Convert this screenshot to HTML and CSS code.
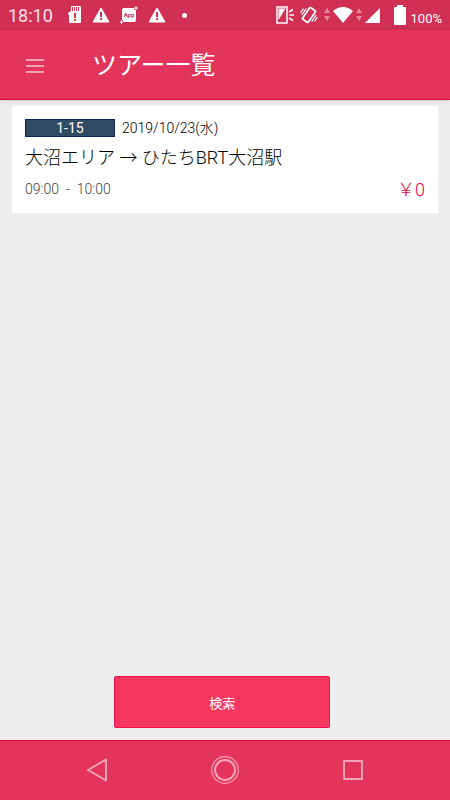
FILE: index.html
```html
<!DOCTYPE html>
<html lang="ja">
<head>
<meta charset="utf-8">
<meta name="viewport" content="width=device-width, initial-scale=1">
<title>ツアー一覧</title>
<link rel="stylesheet" href="styles.css">
</head>
<body>
<div class="status">
  <span class="clock">18:10</span>
  <div class="notices">
    <svg width="14" height="18" viewBox="0 0 14 18"><path fill="#fff" d="M3 0h9a1 1 0 0 1 1 1v15a1 1 0 0 1-1 1H2a1 1 0 0 1-1-1V9L0 8V7l3-2z"/><path stroke="#d13055" d="M4.500 1v4M6.500 1v4M8.500 1v4M10.500 1v4"/><path stroke="#d00" stroke-width="1.500" d="M7 7v5M7 13v2"/></svg>
    <svg width="18" height="16" viewBox="0 0 18 16"><path fill="#fff" stroke="#fff" stroke-linejoin="round" d="M9 1l8 14H1z"/><path stroke="#d13055" stroke-width="2" d="M9 5v5M9 11v2"/></svg>
    <svg width="18" height="18" viewBox="0 0 18 18"><rect x="2" y="2" width="14" height="14" rx="2" fill="#fff"/><path stroke="#d13055" stroke-width="3" d="M16 0v4M14 2h4M1.500 14v4M0 16h3"/><path stroke="#fff" d="M16 0v4M14 2h4M1.500 14v4M0 16h3"/><text x="9" y="11" class="app-label">App</text></svg>
    <svg width="18" height="16" viewBox="0 0 18 16"><path fill="#fff" stroke="#fff" stroke-linejoin="round" d="M9 1l8 14H1z"/><path stroke="#d13055" stroke-width="2" d="M9 5v5M9 11v2"/></svg>
    <span class="dot"></span>
  </div>
  <div class="system">
    <svg width="18" height="18" viewBox="0 0 18 18"><path fill="none" stroke="#fff" stroke-width="1.500" d="M1 1h10v16H1z"/><path fill="#fff" d="M2.500 2.500h7L2.500 14z"/><path stroke="#fff" stroke-width="1.500" d="M13 6l4-2.500M13.500 9H18M13 12l4 2.500"/></svg>
    <svg class="vibrate" width="18" height="18" viewBox="0 0 18 18"><g fill="none" stroke="#fff" transform="rotate(35 9 9)"><rect x="5.500" y="2" width="7" height="14" rx="1" stroke-width="1.800"/><path d="M3 5v8M15 5v8M.8 7v5M17.200 6v5" stroke-width="1.200"/></g></svg>
    <svg class="traffic" width="6" height="14" viewBox="0 0 6 14"><path d="M3 0l3 5H0zM0 8h6l-3 5z"/></svg>
    <svg class="wifi" width="20" height="16" viewBox="0 0 20 16"><path fill="#fff" d="M0 4Q10-4 20 4L10 16z"/></svg>
    <svg class="traffic" width="6" height="14" viewBox="0 0 6 14"><path d="M3 0l3 5H0zM0 8h6l-3 5z"/></svg>
    <svg width="15" height="15" viewBox="0 0 15 15"><path fill="#fff" d="M15 0v15H0z"/></svg>
    <svg class="battery" width="12" height="20" viewBox="0 0 12 20"><path fill="#fff" d="M3 0h6v2h2a1 1 0 0 1 1 1v16a1 1 0 0 1-1 1H1a1 1 0 0 1-1-1V3a1 1 0 0 1 1-1h2z"/></svg>
    <span class="percent">100%</span>
  </div>
</div>
<header class="header">
  <button class="menu" type="button" aria-label="メニュー"><svg width="18" height="16" viewBox="0 0 18 16"><path d="M0 2h18M0 8h18M0 14h18" stroke="#f4a3b5" stroke-width="2"/></svg></button>
  <h1>ツアー一覧</h1>
</header>
<main class="main">
  <article class="card">
    <div class="meta"><span class="badge">1-15</span><span class="date">2019/10/23(水)</span></div>
    <h2>大沼エリア → ひたちBRT大沼駅</h2>
    <div class="details"><span class="time">09:00&nbsp; -&nbsp; 10:00</span><span class="price">￥0</span></div>
  </article>
  <button class="search" type="button">検索</button>
</main>
<nav class="nav">
  <button type="button" aria-label="戻る"><svg width="28" height="28" viewBox="0 0 28 28"><path d="M23 3.500v21L5 14z"/></svg></button>
  <button type="button" aria-label="ホーム"><svg width="28" height="28" viewBox="0 0 28 28"><circle cx="14" cy="14" r="13.300" stroke-width="1.200"/><circle cx="14" cy="14" r="10"/></svg></button>
  <button type="button" aria-label="履歴"><svg width="28" height="28" viewBox="0 0 28 28"><rect x="5" y="5" width="18" height="18"/></svg></button>
</nav>
</body>
</html>
```
FILE: styles.css
```css
* {
  box-sizing: border-box;
}

body {
  margin: 0;
  min-height: 100vh;
  display: flex;
  flex-direction: column;
  background: #eee;
  color: #000;
  font-family: Roboto, "Noto Sans CJK JP", sans-serif;
  font-size: 14px;
}

button {
  padding: 0;
  border: 0;
  background: none;
  font: inherit;
}

svg {
  display: block;
  flex: none;
}

.status {
  height: 30px;
  padding: 0 8px;
  display: flex;
  align-items: center;
  background: #d13055;
  color: #fff;
}

.clock {
  width: 60px;
  color: #fbe3e9;
  font-size: 18px;
}

.notices {
  display: flex;
  align-items: center;
  gap: 10px;
}

.app-label {
  fill: #d13055;
  font-size: 6px;
  font-weight: 700;
  text-anchor: middle;
}

.dot {
  width: 5px;
  height: 5px;
  margin-left: 6px;
  border-radius: 50%;
  background: #fff;
}

.system {
  margin-left: auto;
  display: flex;
  align-items: center;
  gap: 3px;
}

.vibrate {
  margin: 0 3px;
}

.traffic {
  fill: #e9839b;
}

.battery {
  margin: 0 2px 0 11px;
}

.percent {
  padding-top: 6px;
  font-size: 13px;
}

.header {
  height: 70px;
  padding: 2px 26px 0;
  display: flex;
  align-items: center;
  gap: 48px;
  border-bottom: 1px solid #e0003f;
  background: #e3355b;
  box-shadow: 0 1px 4px #0002;
}

h1 {
  margin: 0;
  color: #fff;
  font-size: 25px;
  font-weight: 400;
  line-height: 36px;
}

.main {
  flex: 1;
  padding: 6px 12px 12px;
  display: flex;
  flex-direction: column;
}

.card {
  padding: 12px 13px 10px;
  background: #fff;
}

.meta {
  display: flex;
  align-items: center;
  gap: 7px;
  line-height: 20px;
}

.badge {
  width: 90px;
  border: 1px solid #102050;
  background: #314b64;
  color: #fff;
  line-height: 16px;
  text-align: center;
}

.date {
  font-weight: 300;
}

h2 {
  margin: 6px 0 4px;
  font-size: 18px;
  font-weight: 300;
  line-height: 28px;
}

.details {
  display: flex;
  align-items: center;
  justify-content: space-between;
  line-height: 27px;
}

.time {
  color: #444;
  font-weight: 300;
}

.price {
  color: #e8003f;
  font-size: 18px;
  font-weight: 300;
}

.search {
  width: 216px;
  height: 52px;
  margin: auto 0 0 24%;
  border: 1px solid #f00f50;
  border-radius: 2px;
  background: #f5375f;
  color: #fff;
  font-size: 13px;
}

.nav {
  height: 60px;
  padding-bottom: 2px;
  display: flex;
  align-items: center;
  justify-content: center;
  gap: 100px;
  border-top: 1px solid #e0003f;
  background: #e3355b;
}

.nav svg {
  fill: none;
  stroke: #f4a3b5;
  stroke-width: 2;
  stroke-linejoin: round;
}
```
